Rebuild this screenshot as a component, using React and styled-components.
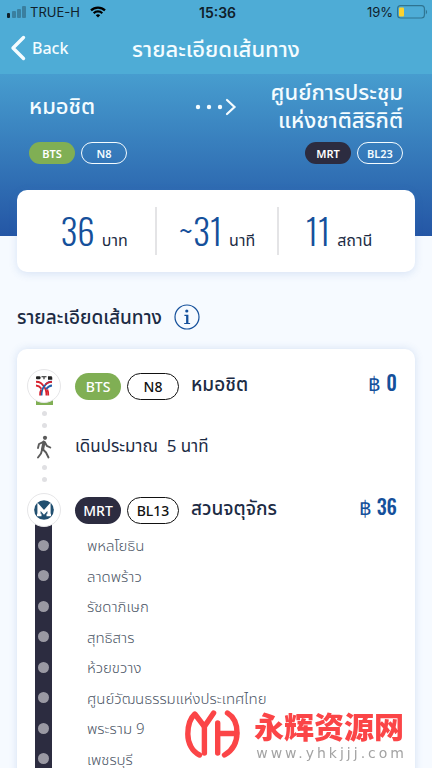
import React from 'react'
import styled, { createGlobalStyle } from 'styled-components'

const colors = {
    sky: '#4eacd6',
    navy: '#2c2c40',
    green: '#80af54',
    blue: '#15509b',
    ink: '#1c2b44',
    muted: '#4c5666',
    page: '#f6faff',
    dot: '#e0e0e3',
    red: '#fb4547',
};

const fonts = {
    body: `"Noto Sans", "Noto Sans Thai", "Open Sans", sans-serif`,
    system: `Inter, "Liberation Sans", sans-serif`,
    narrow: `"Oswald", "Roboto Condensed", "Liberation Sans Narrow", "Open Sans Condensed", Roboto, sans-serif`,
};

const GlobalStyle = createGlobalStyle`
    * {
        box-sizing: border-box;
    }
    body {
        margin: 0;
        background: ${colors.page};
        color: ${colors.ink};
        font-family: ${fonts.body};
    }
    h1, h2, p, ul {
        margin: 0;
        padding: 0;
        font-weight: 400;
    }
`;

const Screen = styled.div`
    height: 100vh;
    display: flex;
    flex-direction: column;
    overflow: hidden;
`;

const Header = styled.header`
    background: ${colors.sky};
    flex: none;
`;

const StatusBar = styled.div`
    display: grid;
    grid-template-columns: 1fr auto 1fr;
    align-items: center;
    height: 24px;
    padding: 0 4px 0 7px;
    font-family: ${fonts.system};
    font-size: 13px;
    color: #10202a;
`;

const StatusGroup = styled.div`
    display: flex;
    align-items: center;
    gap: 4px;
    justify-content: ${({end}) => end ? 'flex-end' : 'flex-start'};
`;

const Clock = styled.span`
    font-weight: 600;
    font-size: 14px;
`;

const NavBar = styled.div`
    display: grid;
    grid-template-columns: 1fr auto 1fr;
    align-items: center;
    height: 50px;
    padding: 0 10px 2px;
    color: #f4fcff;
`;

const BackButton = styled.button`
    display: flex;
    align-items: center;
    justify-self: start;
    gap: 6px;
    padding: 0;
    border: 0;
    background: none;
    color: inherit;
    font-family: inherit;
    font-size: 16px;
    line-height: 24px;
    font-weight: 500;
    cursor: pointer;
`;

const NavTitle = styled.h1`
    font-size: 22px;
    font-weight: 500;
    line-height: 28px;
`;

const Content = styled.main`
    flex: 1;
    overflow-y: auto;
    scrollbar-width: none;
`;

const Hero = styled.section`
    display: grid;
    grid-template-columns: 1fr auto 1fr;
    align-items: center;
    row-gap: 5px;
    padding: 3px 29px 72px;
    background: linear-gradient(#479dcf, #2456a5);
    color: #f4fcff;
`;

const Place = styled.p`
    padding-bottom: 4px;
    font-size: 22px;
    font-weight: 500;
    line-height: 28px;
    white-space: pre;
    text-align: ${({end}) => end ? 'right' : 'left'};
`;

const PillRow = styled.div`
    display: flex;
    gap: 6px;
    justify-content: ${({end}) => end ? 'flex-end' : 'flex-start'};
    ${({end}) => end ? `grid-column: 3;` : ``}
`;

const pillFill = {
    bts: colors.green,
    mrt: colors.navy,
};

const Pill = styled.span`
    display: flex;
    align-items: center;
    justify-content: center;
    width: 46px;
    height: ${({large}) => large ? 27 : 22}px;
    border-radius: 14px;
    font-size: ${({large}) => large ? 14 : 11}px;
    font-weight: ${({large}) => large ? 500 : 600};
    color: #fff;
    background: ${({line}) => pillFill[line]};
`;

const CodePill = styled(Pill)`
    width: ${({large}) => large ? 52 : 46}px;
    border: 1px solid currentColor;
    background: none;
    color: ${({large}) => large ? '#111' : '#f4fcff'};
`;

const Summary = styled.section`
    position: relative;
    display: grid;
    grid-template-columns: repeat(3, 1fr);
    margin: -46px 17px 0;
    padding: 17px 16px;
    border-radius: 10px;
    background: #fff;
    box-shadow: 0 2px 8px rgba(60, 110, 190, 0.16);
`;

const Figure = styled.div`
    display: flex;
    align-items: baseline;
    justify-content: center;
    gap: 7px;
    height: 48px;
    & + & {
        border-left: 2px solid #e4e4e6;
    }
`;

const FigureValue = styled.span`
    font-family: ${fonts.narrow};
    font-size: 35px;
    font-weight: 300;
    line-height: 46px;
    color: ${colors.blue};
`;

const FigureUnit = styled.span`
    font-size: 16px;
`;

const SectionHead = styled.div`
    display: flex;
    align-items: center;
    gap: 12px;
    margin: 32px 17px 19px;
`;

const SectionTitle = styled.h2`
    font-size: 19px;
    font-weight: 500;
    line-height: 24px;
`;

const InfoButton = styled.button`
    display: flex;
    padding: 0;
    border: 0;
    background: none;
    cursor: pointer;
`;

const RouteCard = styled.section`
    margin: 0 17px;
    padding: 19px 18px 24px 10px;
    border-radius: 10px;
    background: #fff;
    box-shadow: 0 0 9px rgba(60, 110, 190, 0.18);
`;

const StationRow = styled.div`
    display: grid;
    grid-template-columns: 34px auto 1fr auto;
    align-items: center;
    height: 34px;
`;

const LogoBadge = styled.span`
    position: relative;
    z-index: 1;
    display: flex;
    align-items: center;
    justify-content: center;
    height: 34px;
    border: 1px solid #e6e6e8;
    border-radius: 50%;
    background: #fff;
`;

const StationPills = styled(PillRow)`
    margin: 0 12px 0 14px;
`;

const StationName = styled.span`
    padding-bottom: 4px;
    font-size: 19px;
    font-weight: 500;
    line-height: 28px;
`;

const Price = styled.span`
    padding-bottom: 8px;
    font-family: ${fonts.narrow};
    font-size: 20px;
    font-weight: 500;
    line-height: 28px;
    color: ${colors.blue};
`;

const Transfer = styled.div`
    display: grid;
    grid-template-columns: 34px 1fr;
    column-gap: 14px;
    align-items: center;
    height: 90px;
`;

const TransferRail = styled.div`
    display: flex;
    flex-direction: column;
    align-items: center;
    gap: 6px;
    height: 90px;
`;

const LineEnd = styled.span`
    flex: none;
    width: 17px;
    height: 11px;
    margin-top: -8px;
    background: ${colors.green};
`;

const RailDot = styled.span`
    flex: none;
    width: 5px;
    height: 5px;
    margin: 0 0 1px;
    border-radius: 50%;
    background: ${colors.dot};
`;

const TransferText = styled.p`
    padding-bottom: 2px;
    font-size: 17px;
    line-height: 28px;
    white-space: pre;
`;

const StopList = styled.ul`
    display: grid;
    grid-auto-rows: 1fr;
    height: 258px;
    margin-top: -10px;
    padding-top: 14px;
    list-style: none;
    background: linear-gradient(${colors.navy}, ${colors.navy}) 8px 0 / 17px 100% no-repeat;
`;

const Stop = styled.li`
    display: flex;
    align-items: center;
    gap: 38px;
    padding-left: 11px;
    font-size: 15px;
    line-height: 28px;
    font-weight: 300;
    color: ${colors.muted};
    &::before {
        content: '';
        width: 11px;
        height: 11px;
        border-radius: 50%;
        background: #9a99a3;
    }
`;

const Watermark = styled.div`
    position: fixed;
    right: 28px;
    bottom: 7px;
    display: flex;
    align-items: center;
    gap: 14px;
`;

const BrandText = styled.div`
    display: flex;
    flex-direction: column;
    align-items: flex-end;
    gap: 2px;
`;

const BrandName = styled.span`
    font-family: "Noto Sans CJK SC", sans-serif;
    font-size: 30px;
    font-weight: 900;
    line-height: 36px;
    color: ${colors.red};
`;

// the negative margin takes back the tracking after the last letter
const BrandUrl = styled.span`
    margin-right: -3px;
    font-family: "DejaVu Sans", sans-serif;
    font-size: 14px;
    line-height: 16px;
    letter-spacing: 3px;
    color: #a3a3a3;
`;

const SignalIcon = () => (
    <svg width="19" height="12" viewBox="0 0 19 12" aria-hidden="true">
        <rect x="0" y="7" width="3" height="5" rx="1" fill="#10202a" />
        <rect x="5" y="5" width="4" height="7" rx="1" fill="#3a7f9f" />
        <rect x="10" y="3" width="4" height="9" rx="1" fill="#3a7f9f" />
        <rect x="15" y="0" width="4" height="12" rx="1" fill="#3a7f9f" />
    </svg>
)

const WifiIcon = () => (
    <svg width="24" height="12" viewBox="-6 0 24 12" fill="none" stroke="#000" strokeWidth="2.2" aria-hidden="true">
        <path d="M1 4.4a10 10 0 0 1 14 0" />
        <path d="M3.7 7.2a6.2 6.2 0 0 1 8.6 0" />
        <path d="M5.8 9.2a3.2 3.2 0 0 1 4.4 0L8 11.6z" fill="#000" stroke="none" />
    </svg>
)

const BatteryIcon = () => (
    <svg width="31" height="14" viewBox="0 0 31 14" aria-hidden="true">
        <rect x="0.6" y="0.6" width="26.8" height="12.4" rx="3" fill="none" stroke="#2f7390" strokeWidth="1.1" />
        <rect x="2" y="2.4" width="5" height="9" rx="1" fill="#fbd22f" />
        <path d="M28.8 4.6q2.6 2.4 0 4.8z" fill="#2f7390" />
    </svg>
)

const BackIcon = () => (
    <svg width="16" height="26" viewBox="0 0 16 26" fill="none" stroke="currentColor" strokeWidth="3.4" strokeLinecap="round" strokeLinejoin="round" aria-hidden="true">
        <path d="M13.5 2.5 3 13l10.500 10.500" />
    </svg>
)

const ArrowIcon = () => (
    <svg width="42" height="18" viewBox="0 0 42 18" aria-hidden="true">
        <circle cx="3" cy="9" r="2.200" fill="#f4fcff" />
        <circle cx="14" cy="9" r="2.200" fill="#f4fcff" />
        <circle cx="25" cy="9" r="2.200" fill="#f4fcff" />
        <path d="m32 2 7.500 7-7.500 7" fill="none" stroke="#f4fcff" strokeWidth="2.200" strokeLinecap="round" />
    </svg>
)

const InfoIcon = () => (
    <svg width="26" height="26" viewBox="0 0 26 26" fill={colors.blue} aria-hidden="true">
        <circle cx="13" cy="13" r="12" fill="none" stroke={colors.blue} strokeWidth="1.2" />
        <circle cx="12.8" cy="7" r="1.6" />
        <path d="M10.4 10.7h4v8.200h1.700v1.100h-5.900v-1.100h1.900v-7h-1.700z" />
    </svg>
)

const BtsLogo = () => (
    <svg width="18" height="22" viewBox="0 0 18 22" fill="none" aria-hidden="true">
        <rect x="1" y="1.200" width="4.500" height="3" rx="1" fill="#222" />
        <path d="M6.500 1.800h5M9 1.800v2.500M16.800 1.700h-3.300v1.200h3.200v1.200h-3.700" stroke="#222" strokeWidth="1.100" />
        <path d="M1 6.800c5 0 6 2.200 8.300 5.200 1.600 2 2.200 3.500 2.200 8.500" stroke="#d8232f" strokeWidth="1.900" />
        <path d="M1 10.500c3 .2 4 1.200 5.500 3.200" stroke="#d8232f" strokeWidth="1.900" />
        <path d="M17 6.800c-5 0-6 2.200-8.300 5.200-1.600 2-2.200 3.500-2.200 8.500" stroke="#2460a8" strokeWidth="1.900" />
        <path d="M17 10.500c-3 .2-4.500 1.700-6 3.700" stroke="#2460a8" strokeWidth="1.900" />
        <path d="M17 6.800c-3.500 0-5 1-6.500 2.700M5 20.500c0-3 .3-4.500 1.200-6M13.300 20.500c0-3-.2-4.500-1-6" stroke="#d8232f" strokeWidth="1.700" />
    </svg>
)

const MrtLogo = () => (
    <svg width="20" height="20" viewBox="0 0 20 20" aria-hidden="true">
        <circle cx="10" cy="10" r="9.800" fill="#214f70" />
        <path d="M5 15V6.800l5 5.600 5-5.600V15" fill="none" stroke="#fff" strokeWidth="3.2" />
        <path d="M3 15h4.500M12.500 15h4.500" stroke="#fff" strokeWidth="2.400" />
    </svg>
)

const WalkIcon = () => (
    <svg width="16" height="24" viewBox="0 0 16 24" fill="none" stroke="#5b5b5b" strokeWidth="1.9" strokeLinecap="round" strokeLinejoin="round" aria-hidden="true">
        <circle cx="9" cy="2.800" r="2.100" fill="#5b5b5b" stroke="none" />
        <path d="M8 7.200 6.500 14.500" strokeWidth="3.200" />
        <path d="M7.500 6.800 3 9 2 13" />
        <path d="M9 7.500 10.800 10.800 14.300 12.500" />
        <path d="M7 14.500 10 17.500 12.500 22.500" />
        <path d="M6 15 5 18.500 2 22.500" />
    </svg>
)

const YhLogo = () => (
    <svg width="55" height="48" viewBox="0 0 55 48" fill="none" stroke={colors.red} strokeWidth="5.4" strokeLinecap="round" strokeLinejoin="round" aria-hidden="true">
        <path d="M14.500 45C7 41.500 2.800 33 2.800 24 2.800 15 6 7.500 9.800 4L19.400 16.500 28.600 3" />
        <path d="M19.400 16.500v26.500" />
        <path d="M42.500 3c6.500 4 9.500 11 9.500 19.500 0 10-4.500 18-12.500 22.500" />
        <path d="M32.700 13v30M32.700 23.500h19" />
    </svg>
)

const stops = [
    'พหลโยธิน',
    'ลาดพร้าว',
    'รัชดาภิเษก',
    'สุทธิสาร',
    'ห้วยขวาง',
    'ศูนย์วัฒนธรรมแห่งประเทศไทย',
    'พระราม 9',
    'เพชรบุรี',
]

const figures = [
    {value: '36', unit: 'บาท'},
    {value: '~31', unit: 'นาที'},
    {value: '11', unit: 'สถานี'},
]

function Station({logo, line, lineName, code, name, price}) {
    return (
        <StationRow>
            <LogoBadge>{logo}</LogoBadge>
            <StationPills>
                <Pill large line={line}>{lineName}</Pill>
                <CodePill large>{code}</CodePill>
            </StationPills>
            <StationName>{name}</StationName>
            <Price>฿ {price}</Price>
        </StationRow>
    )
}

export default function App() {
    return (
        <Screen>
            <GlobalStyle />
            <Header>
                <StatusBar>
                    <StatusGroup>
                        <SignalIcon />
                        <span>TRUE-H</span>
                        <WifiIcon />
                    </StatusGroup>
                    <Clock>15:36</Clock>
                    <StatusGroup end>
                        <span>19%</span>
                        <BatteryIcon />
                    </StatusGroup>
                </StatusBar>
                <NavBar>
                    <BackButton type="button">
                        <BackIcon />
                        Back
                    </BackButton>
                    <NavTitle>รายละเอียดเส้นทาง</NavTitle>
                </NavBar>
            </Header>
            <Content>
                <Hero>
                    <Place>หมอชิต</Place>
                    <ArrowIcon />
                    <Place end>{'ศูนย์การประชุม\nแห่งชาติสิริกิติ์'}</Place>
                    <PillRow>
                        <Pill line="bts">BTS</Pill>
                        <CodePill>N8</CodePill>
                    </PillRow>
                    <PillRow end>
                        <Pill line="mrt">MRT</Pill>
                        <CodePill>BL23</CodePill>
                    </PillRow>
                </Hero>
                <Summary>
                    {figures.map(({value, unit}) => (
                        <Figure key={unit}>
                            <FigureValue>{value}</FigureValue>
                            <FigureUnit>{unit}</FigureUnit>
                        </Figure>
                    ))}
                </Summary>
                <SectionHead>
                    <SectionTitle>รายละเอียดเส้นทาง</SectionTitle>
                    <InfoButton type="button" aria-label="Info">
                        <InfoIcon />
                    </InfoButton>
                </SectionHead>
                <RouteCard>
                    <Station logo={<BtsLogo />} line="bts" lineName="BTS" code="N8" name="หมอชิต" price="0" />
                    <Transfer>
                        <TransferRail>
                            <LineEnd />
                            <RailDot />
                            <RailDot />
                            <WalkIcon />
                            <RailDot />
                            <RailDot />
                        </TransferRail>
                        <TransferText>{'เดินประมาณ  5 นาที'}</TransferText>
                    </Transfer>
                    <Station logo={<MrtLogo />} line="mrt" lineName="MRT" code="BL13" name="สวนจตุจักร" price="36" />
                    <StopList>
                        {stops.map(stop => <Stop key={stop}>{stop}</Stop>)}
                    </StopList>
                </RouteCard>
            </Content>
            <Watermark>
                <YhLogo />
                <BrandText>
                    <BrandName>永辉资源网</BrandName>
                    <BrandUrl>www.yhkjjj.com</BrandUrl>
                </BrandText>
            </Watermark>
        </Screen>
    )
}
